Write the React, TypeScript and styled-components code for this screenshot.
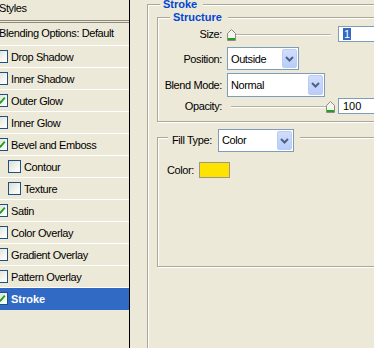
import React from "react";
import styled, { createGlobalStyle } from "styled-components";

const GlobalStyle = createGlobalStyle`
  html, body {
    margin: 0;
    padding: 0;
    background: #ece9d8;
  }
  body {
    width: 374px;
    height: 348px;
    overflow: hidden;
    font-family: "Liberation Sans", Arial, sans-serif;
    font-size: 11px;
    color: #000;
  }
`;

const styleItems = [
  { name: "Drop Shadow", checked: false },
  { name: "Inner Shadow", checked: false },
  { name: "Outer Glow", checked: true },
  { name: "Inner Glow", checked: false },
  { name: "Bevel and Emboss", checked: true },
  { name: "Contour", checked: false, indent: true },
  { name: "Texture", checked: false, indent: true },
  { name: "Satin", checked: true },
  { name: "Color Overlay", checked: false },
  { name: "Gradient Overlay", checked: false },
  { name: "Pattern Overlay", checked: false },
  { name: "Stroke", checked: true, selected: true },
];

const Check = ({ checked }: { checked: boolean }) => (
  <CheckBox>
    {checked && (
      <svg width="9" height="9" viewBox="0 0 9 9">
        <path d="M1.2 4.2 L3.5 6.6 L7.8 1.6" fill="none" stroke="#21a121" strokeWidth="1.9" />
      </svg>
    )}
  </CheckBox>
);

const Chevron = () => (
  <svg width="9" height="6" viewBox="0 0 9 6">
    <path d="M1 1 L4.5 4.5 L8 1" fill="none" stroke="#4d6185" strokeWidth="2" />
  </svg>
);

const Slider = ({ value }: { value: number }) => (
  <SliderWrap>
    <Track />
    <Thumb style={{ left: `${(value / 100) * 99}px` }}>
      <svg width="9" height="12" viewBox="0 0 9 12">
        <path d="M0.5 4.5 L4.5 0.5 L8.5 4.5 V11.5 H0.5 Z" fill="#f5f5f0" stroke="#8c8c80" />
        <rect x="1" y="9" width="7" height="2" fill="#21a121" />
      </svg>
    </Thumb>
  </SliderWrap>
);

const Dropdown = ({ value, w, h }: { value: string; w: number; h: number }) => (
  <Select $w={w} $h={h}>
    <SelectValue>{value}</SelectValue>
    <DropButton>
      <Chevron />
    </DropButton>
  </Select>
);

export default function App() {
  return (
    <>
      <GlobalStyle />
      <Window>
        <StyleList>
          <ListInner>
            <Header>Styles</Header>
            <BlendRow>Blending Options: Default</BlendRow>
            {styleItems.map((item) => (
              <StyleRow key={item.name} $indent={!!item.indent} $selected={!!item.selected}>
                <Check checked={item.checked} />
                {item.name}
              </StyleRow>
            ))}
          </ListInner>
        </StyleList>

        <Settings>
          <Group $w={260} $h={360} $pad="12px 0 0 9px" $gap={15}>
            <Caption $left={12} $top={-7}>
              <Legend>Stroke</Legend>
            </Caption>

            <Group $w={260} $h={105} $pad="8px 0 0 0">
              <Caption $left={12} $top={-7}>
                <Legend>Structure</Legend>
              </Caption>
              <Field $h={16}>
                <Label>Size:</Label>
                <Controls>
                  <Slider value={0} />
                  <TextBox>
                    <Selected>1</Selected>
                  </TextBox>
                </Controls>
              </Field>
              <Field $h={23} $mt={5}>
                <Label>Position:</Label>
                <Dropdown value="Outside" w={72} h={23} />
              </Field>
              <Field $h={24} $mt={3}>
                <Label>Blend Mode:</Label>
                <Dropdown value="Normal" w={98} h={24} />
              </Field>
              <Field $h={15} $mt={1}>
                <Label>Opacity:</Label>
                <Controls>
                  <Slider value={100} />
                  <TextBox>100</TextBox>
                </Controls>
              </Field>
            </Group>

            <Group $w={260} $h={130} $pad="24px 0 0 9px">
              <Caption $left={10} $top={-9}>
                <FillLabel>Fill Type:</FillLabel>
                <Dropdown value="Color" w={76} h={23} />
              </Caption>
              <ColorRow>
                <span>Color:</span>
                <Swatch />
              </ColorRow>
            </Group>
          </Group>
        </Settings>
      </Window>
    </>
  );
}

const Window = styled.div`
  display: flex;
  width: 374px;
  height: 348px;
  overflow: hidden;
  background: #ece9d8;
  letter-spacing: -0.4px;
`;

const StyleList = styled.div`
  width: 129px;
  flex: none;
  border-right: 1px solid #000;
  overflow: hidden;
`;

const ListInner = styled.div`
  margin-left: -6px;
`;

const Header = styled.div`
  height: 20px;
  padding-left: 5px;
  line-height: 17px;
  border-bottom: 3px double #8d8a7d;
`;

const BlendRow = styled.div`
  height: 22px;
  padding-left: 5px;
  line-height: 21px;
  border-bottom: 1px solid #fff;
`;

const StyleRow = styled.div<{ $indent: boolean; $selected: boolean }>`
  display: flex;
  align-items: center;
  height: 21px;
  padding-left: ${(p) => (p.$indent ? 14 : 1)}px;
  border-bottom: 1px solid ${(p) => (p.$selected ? "#316ac5" : "#fff")};
  background: ${(p) => (p.$selected ? "#316ac5" : "transparent")};
  color: ${(p) => (p.$selected ? "#fff" : "#000")};
  font-weight: ${(p) => (p.$selected ? "bold" : "normal")};
  letter-spacing: ${(p) => (p.$selected ? "0" : "-0.4px")};
  white-space: nowrap;
`;

const CheckBox = styled.span`
  width: 13px;
  height: 13px;
  flex: none;
  box-sizing: border-box;
  margin-right: 3px;
  border: 1px solid #1c5180;
  background: linear-gradient(135deg, #dcdcd4 0%, #f4f4f0 60%, #fff 100%);
  display: flex;
  align-items: center;
  justify-content: center;
`;

const Settings = styled.div`
  flex: 1;
  padding: 4px 0 0 17px;
  overflow: hidden;
`;

const Group = styled.div<{ $w: number; $h: number; $pad: string; $gap?: number }>`
  position: relative;
  flex: none;
  display: flex;
  flex-direction: column;
  gap: ${(p) => p.$gap ?? 0}px;
  box-sizing: border-box;
  width: ${(p) => p.$w}px;
  height: ${(p) => p.$h}px;
  padding: ${(p) => p.$pad};
  border: 1px solid #aca899;
  box-shadow: inset 1px 1px 0 #fff, 1px 1px 0 #fff;
`;

const Caption = styled.div<{ $left: number; $top: number }>`
  position: absolute;
  left: ${(p) => p.$left}px;
  top: ${(p) => p.$top}px;
  display: flex;
  align-items: center;
  padding: 0 6px 0 3px;
  background: #ece9d8;
  line-height: 13px;
`;

const Legend = styled.span`
  font-weight: bold;
  color: #0046d5;
  letter-spacing: 0;
`;

const FillLabel = styled.span`
  width: 46px;
  padding-left: 1px;
`;

const Field = styled.div<{ $h: number; $mt?: number }>`
  display: grid;
  grid-template-columns: 64px auto;
  column-gap: 5px;
  align-items: center;
  justify-items: start;
  height: ${(p) => p.$h}px;
  margin-top: ${(p) => p.$mt ?? 0}px;
`;

const Label = styled.span`
  justify-self: end;
  white-space: nowrap;
`;

const Controls = styled.div`
  display: flex;
  align-items: center;
  gap: 3px;
`;

const SliderWrap = styled.div`
  position: relative;
  width: 108px;
  height: 14px;
  display: flex;
  align-items: center;
`;

const Track = styled.div`
  flex: 1;
  margin: 1px 4px 0;
  height: 1px;
  background: #b5b2a4;
  border-bottom: 1px solid #fff;
`;

const Thumb = styled.div`
  position: absolute;
  top: 50%;
  margin-top: -5px;
  width: 9px;
  height: 12px;
  line-height: 0;
`;

const TextBox = styled.div`
  width: 40px;
  height: 16px;
  box-sizing: border-box;
  border: 1px solid #7f9db9;
  background: #fff;
  padding-left: 4px;
  line-height: 14px;
  letter-spacing: 0;
`;

const Selected = styled.span`
  background: #316ac5;
  color: #fff;
  padding: 0 1px;
`;

const Select = styled.div<{ $w: number; $h: number }>`
  display: flex;
  align-items: center;
  width: ${(p) => p.$w}px;
  height: ${(p) => p.$h}px;
  box-sizing: border-box;
  padding: 1px 1px 1px 3px;
  border: 1px solid #7f9db9;
  background: #fff;
`;

const SelectValue = styled.span`
  flex: 1;
  white-space: nowrap;
`;

const DropButton = styled.span`
  width: 15px;
  align-self: stretch;
  box-sizing: border-box;
  border: 1px solid #bccdf5;
  border-radius: 2px;
  background: linear-gradient(180deg, #d0ddfd 0%, #b9cdf9 100%);
  display: flex;
  align-items: center;
  justify-content: center;
`;

const ColorRow = styled.div`
  display: flex;
  align-items: center;
  gap: 5px;
`;

const Swatch = styled.span`
  width: 31px;
  height: 16px;
  box-sizing: border-box;
  border: 1px solid #9a988a;
  background: #ffe300;
`;
